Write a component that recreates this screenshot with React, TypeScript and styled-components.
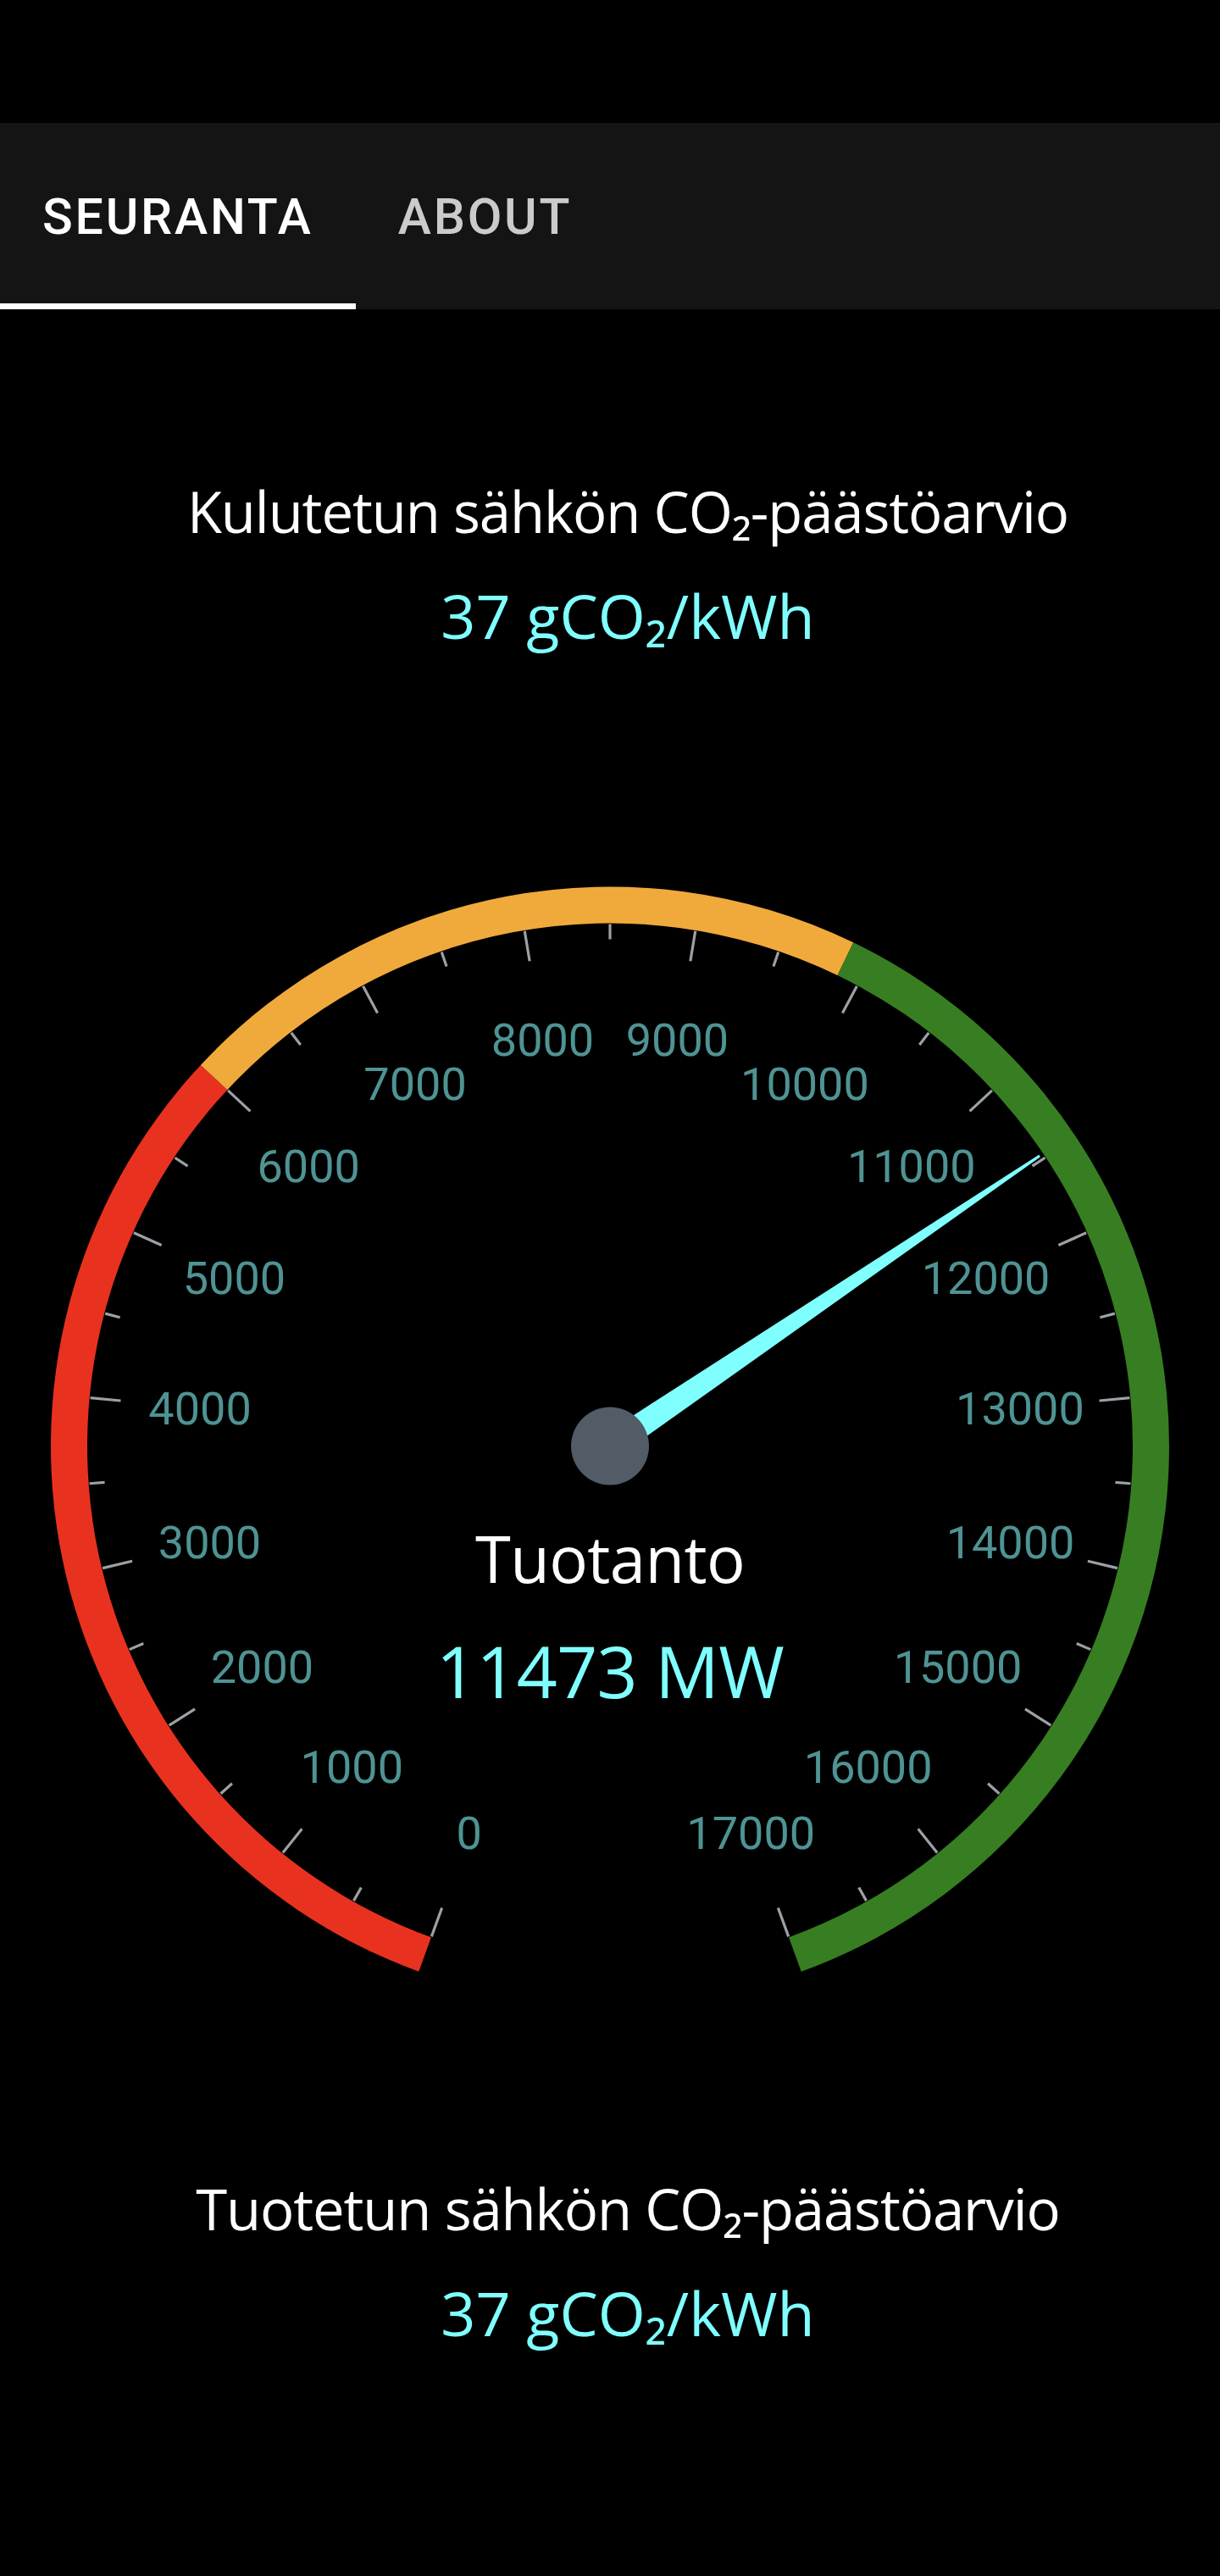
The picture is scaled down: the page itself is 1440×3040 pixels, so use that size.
import React from "react";
import styled, { createGlobalStyle } from "styled-components";

const GlobalStyle = createGlobalStyle`
  html, body {
    margin: 0;
    padding: 0;
    background: #000;
  }
  * { box-sizing: border-box; }
`;

const Page = styled.div`
  width: 1440px;
  min-height: 3040px;
  background: #000;
  display: flex;
  flex-direction: column;
`;

const StatusArea = styled.div`
  height: 145px;
  background: #000;
`;

const TabBar = styled.nav`
  height: 220px;
  background: #141414;
  display: flex;
  align-items: stretch;
`;

const Tab = styled.button<{ $active?: boolean }>`
  position: relative;
  background: transparent;
  border: none;
  padding: 0 50px;
  margin: 0;
  font-family: Roboto, "Liberation Sans", sans-serif;
  font-weight: 500;
  font-size: 59px;
  letter-spacing: 2.8px;
  text-transform: uppercase;
  color: ${(p) => (p.$active ? "#ffffff" : "rgba(255,255,255,0.78)")};
  cursor: pointer;
  &::after {
    content: "";
    position: absolute;
    left: 0;
    right: 0;
    bottom: 0;
    height: 7px;
    background: ${(p) => (p.$active ? "#ffffff" : "transparent")};
  }
`;

const Main = styled.main`
  display: flex;
  flex-direction: column;
  align-items: center;
`;

const Estimate = styled.section<{ $top: number }>`
  margin-top: ${(p) => p.$top}px;
  padding-left: 42px;
  width: 100%;
  display: flex;
  flex-direction: column;
  align-items: center;
  gap: 40px;
  font-family: "Open Sans", "Noto Sans", sans-serif;
`;

const EstimateTitle = styled.h2`
  margin: 0;
  font-weight: 400;
  font-size: 67px;
  letter-spacing: -1.1px;
  line-height: 1.2;
  color: #ffffff;
  white-space: nowrap;
`;

const EstimateValue = styled.div`
  font-weight: 400;
  font-size: 72px;
  line-height: 1.2;
  color: #80ffff;
  white-space: nowrap;
`;

const GaugeWrap = styled.div`
  margin-top: 230px;
  width: 1440px;
  height: 1400px;
  display: flex;
  justify-content: center;
`;

const GaugeSvg = styled.svg`
  display: block;
`;

const CX = 720;
const CY = 706.5;
const MAX = 17000;
const START = -160;
const SWEEP = 320;

const ang = (v: number) => START + (SWEEP * v) / MAX;
const pt = (r: number, deg: number) => {
  const a = (deg * Math.PI) / 180;
  return [CX + r * Math.sin(a), CY - r * Math.cos(a)];
};

const band = (rIn: number, rOut: number, a0: number, a1: number) => {
  const [x0, y0] = pt(rOut, a0);
  const [x1, y1] = pt(rOut, a1);
  const [x2, y2] = pt(rIn, a1);
  const [x3, y3] = pt(rIn, a0);
  const large = a1 - a0 > 180 ? 1 : 0;
  return `M${x0} ${y0} A${rOut} ${rOut} 0 ${large} 1 ${x1} ${y1} L${x2} ${y2} A${rIn} ${rIn} 0 ${large} 0 ${x3} ${y3} Z`;
};

const segments = [
  { from: START, to: ang(6000), color: "#e8321f" },
  { from: ang(6000), to: 25.8, color: "#f0aa3c" },
  { from: 25.8, to: START + SWEEP, color: "#377e22" },
];

const ticks: { v: number; major: boolean }[] = [];
for (let v = 0; v <= MAX; v += 500) ticks.push({ v, major: v % 1000 === 0 });

const VALUE = 11473;

function Gauge() {
  const na = ang(VALUE);
  const tip = 612;
  const [tx1, ty1] = pt(tip, na - 0.14);
  const [tx2, ty2] = pt(tip, na + 0.14);
  const rad = (na * Math.PI) / 180;
  const px = Math.cos(rad);
  const py = Math.sin(rad);
  const bw = 15.5;
  const b1 = [CX - px * bw, CY - py * bw];
  const b2 = [CX + px * bw, CY + py * bw];
  const needle = `M${b1[0]} ${b1[1]} L${tx1} ${ty1} L${tx2} ${ty2} L${b2[0]} ${b2[1]} Z`;

  return (
    <GaugeSvg width={1440} height={1400} viewBox="0 0 1440 1400">
      {segments.map((s) => (
        <path key={s.color} d={band(617, 660, s.from, s.to)} fill={s.color} />
      ))}
      {ticks.map((t) => {
        const a = ang(t.v);
        const [x1, y1] = pt(616, a);
        const [x2, y2] = pt(t.major ? 580 : 598, a);
        return (
          <line
            key={t.v}
            x1={x1}
            y1={y1}
            x2={x2}
            y2={y2}
            stroke="#9ca1a7"
            strokeWidth={3.2}
          />
        );
      })}
      {ticks
        .filter((t) => t.major)
        .map((t) => {
          const [x, y] = pt(486, ang(t.v));
          return (
            <text
              key={`l${t.v}`}
              x={x}
              y={y + 19.2}
              textAnchor="middle"
              fontFamily="Roboto, 'Liberation Sans', sans-serif"
              fontSize={54}
              fill="#4f9394"
            >
              {t.v}
            </text>
          );
        })}
      <path d={needle} fill="#80ffff" />
      <circle cx={CX} cy={CY} r={46} fill="#525c66" />
      <text
        x={CX}
        y={868}
        textAnchor="middle"
        fontFamily="'Open Sans', 'Noto Sans', sans-serif"
        fontSize={76}
        letterSpacing={-0.6}
        fill="#ffffff"
      >
        Tuotanto
      </text>
      <text
        x={CX}
        y={1004}
        textAnchor="middle"
        fontFamily="'Open Sans', 'Noto Sans', sans-serif"
        fontSize={84}
        letterSpacing={-0.6}
        fill="#80ffff"
      >
        {VALUE} MW
      </text>
    </GaugeSvg>
  );
}

export default function App() {
  return (
    <>
      <GlobalStyle />
      <Page>
        <StatusArea />
        <TabBar>
          <Tab $active>Seuranta</Tab>
          <Tab>About</Tab>
        </TabBar>
        <Main>
          <Estimate $top={198}>
            <EstimateTitle>Kulutetun sähkön CO₂-päästöarvio</EstimateTitle>
            <EstimateValue>37 gCO₂/kWh</EstimateValue>
          </Estimate>
          <GaugeWrap>
            <Gauge />
          </GaugeWrap>
          <Estimate $top={166}>
            <EstimateTitle>Tuotetun sähkön CO₂-päästöarvio</EstimateTitle>
            <EstimateValue>37 gCO₂/kWh</EstimateValue>
          </Estimate>
        </Main>
      </Page>
    </>
  );
}
